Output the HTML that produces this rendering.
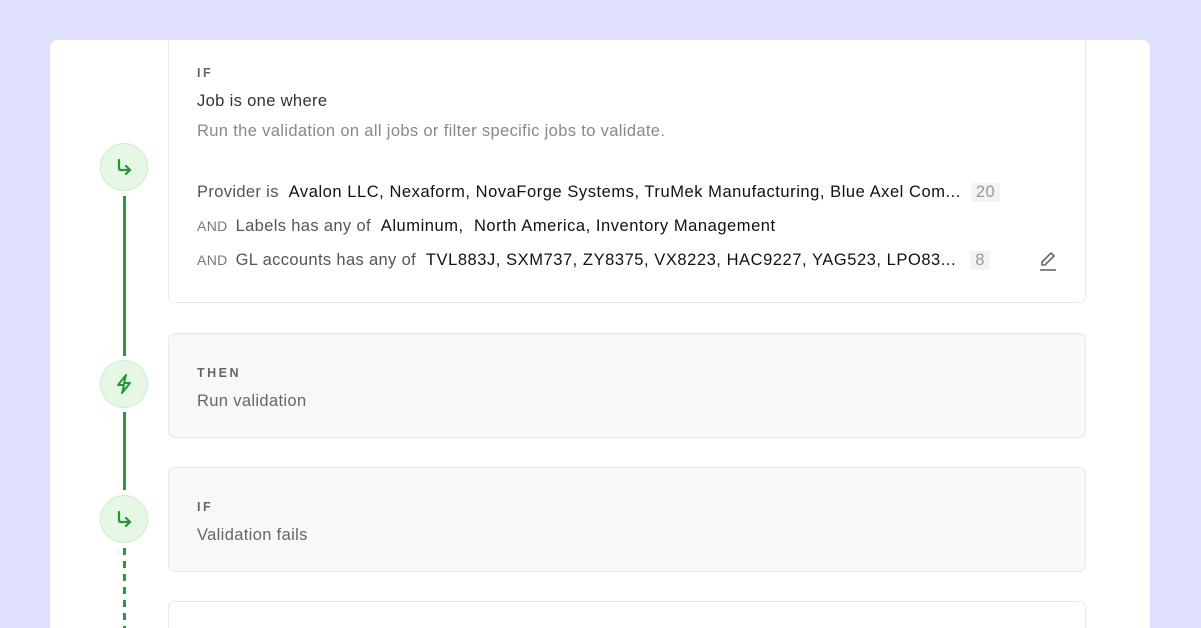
<!DOCTYPE html>
<html><head><style>
*{margin:0;padding:0;box-sizing:border-box}
html,body{width:1201px;height:628px;overflow:hidden}
body{background:#dfe1fd;font-family:"Liberation Sans",sans-serif;position:relative}
.panel{position:absolute;left:50px;top:40px;width:1100px;height:588px;background:#fff;border-radius:8px 8px 0 0;overflow:hidden}
.card{position:absolute;left:118px;width:918px;border:1px solid #e8e8e8;border-radius:7px}
.gray{background:#f8f8f8}
.lbl{position:absolute;left:28px;font-size:12.5px;font-weight:bold;letter-spacing:2.5px;color:#666}
.t{position:absolute;left:28px;font-size:16.5px;white-space:nowrap;letter-spacing:0.35px}
.circ{position:absolute;left:50px;width:48px;height:48px;border-radius:50%;background:#e6f7e6;border:1px solid #cdeccd;display:flex;align-items:center;justify-content:center}
.and{font-size:14px;color:#777;margin-right:8px}
b{font-weight:normal;color:#111;letter-spacing:0.55px}
.cnt{display:inline-block;background:#f3f3f3;color:#999;padding:0 5px;margin-left:10px}
</style></head><body>
<div class="panel">
<div style="position:absolute;left:73px;top:156px;width:3px;height:160px;background:#2a9a3a"></div>
<div style="position:absolute;left:73px;top:372px;width:3px;height:78px;background:#2a9a3a"></div>
<div style="position:absolute;left:73px;top:508px;width:3px;height:80px;background:repeating-linear-gradient(#2a9a3a 0 7px,transparent 7px 13px)"></div>
<div class="card" style="top:-20px;height:283px;background:#fff">
 <div class="lbl" style="top:45px">IF</div>
 <div class="t" style="top:71px;color:#333">Job is one where</div>
 <div class="t" style="top:101px;color:#888">Run the validation on all jobs or filter specific jobs to validate.</div>
 <div class="t" style="top:162px;color:#555">Provider is&nbsp; <b>Avalon LLC, Nexaform, NovaForge Systems, TruMek Manufacturing, Blue Axel Com...</b><span class="cnt">20</span></div>
 <div class="t" style="top:196px;color:#555"><span class="and">AND</span>Labels has any of&nbsp; <b>Aluminum,&nbsp; North America, Inventory Management</b></div>
 <div class="t" style="top:230px;color:#555"><span class="and">AND</span>GL accounts has any of&nbsp; <b>TVL883J, SXM737, ZY8375, VX8223, HAC9227, YAG523, LPO83...</b><span class="cnt" style="margin-left:14px">8</span></div>
 <svg style="position:absolute;left:869px;top:229px" width="20" height="22" viewBox="0 0 20 22" fill="none" stroke="#666" stroke-width="1.6"><path d="M4 15 L4 12 L13 3 L16 6 L7 15 Z"/><path d="M2 20 H18"/></svg>
</div>
<div class="card gray" style="top:293px;height:105px">
 <div class="lbl" style="top:32px">THEN</div>
 <div class="t" style="top:58px;color:#666">Run validation</div>
</div>
<div class="card gray" style="top:427px;height:105px">
 <div class="lbl" style="top:32px">IF</div>
 <div class="t" style="top:58px;color:#666">Validation fails</div>
</div>
<div class="card" style="top:561px;height:40px;background:#fff"></div>
<div class="circ" style="top:103px"><svg width="20" height="20" viewBox="0 0 20 20" fill="none" stroke="#1f9a33" stroke-width="2.2" stroke-linecap="round" stroke-linejoin="round"><path d="M5 3 V11 Q5 13 7 13 H16"/><path d="M12 9 L16 13 L12 17"/></svg></div>
<div class="circ" style="top:320px"><svg width="20" height="22" viewBox="0 0 20 22" fill="none" stroke="#1f9a33" stroke-width="2" stroke-linejoin="round"><path d="M12 2 L4 12 H10 L8 20 L16 10 H10 Z"/></svg></div>
<div class="circ" style="top:455px"><svg width="20" height="20" viewBox="0 0 20 20" fill="none" stroke="#1f9a33" stroke-width="2.2" stroke-linecap="round" stroke-linejoin="round"><path d="M5 3 V11 Q5 13 7 13 H16"/><path d="M12 9 L16 13 L12 17"/></svg></div>
</div>
</body></html>
